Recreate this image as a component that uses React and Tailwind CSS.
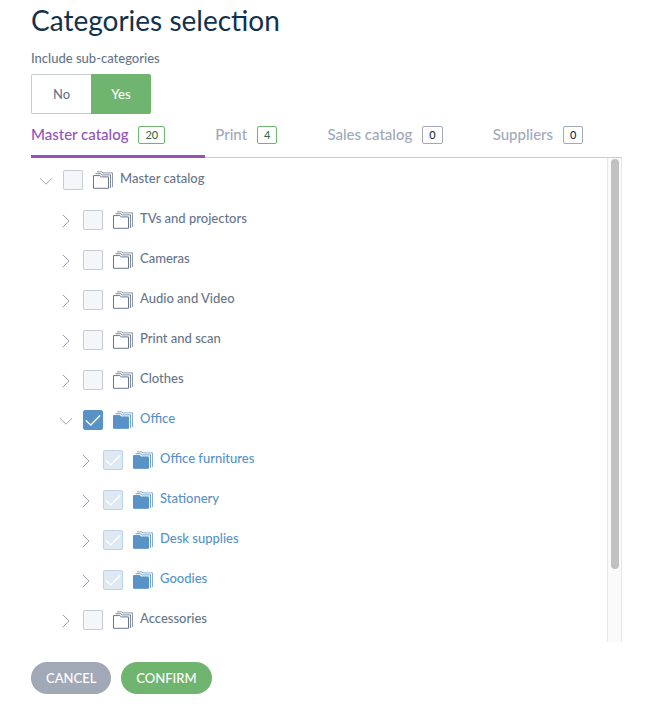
import { useState } from "react";

const TABS = [
  { label: "Master catalog", count: 20 },
  { label: "Print", count: 4 },
  { label: "Sales catalog", count: 0 },
  { label: "Suppliers", count: 0 },
];

const ROWS = [
  { label: "Master catalog", level: 0, open: true, state: "none" },
  { label: "TVs and projectors", level: 1, state: "none" },
  { label: "Cameras", level: 1, state: "none" },
  { label: "Audio and Video", level: 1, state: "none" },
  { label: "Print and scan", level: 1, state: "none" },
  { label: "Clothes", level: 1, state: "none" },
  { label: "Office", level: 1, open: true, state: "checked" },
  { label: "Office furnitures", level: 2, state: "inherited" },
  { label: "Stationery", level: 2, state: "inherited" },
  { label: "Desk supplies", level: 2, state: "inherited" },
  { label: "Goodies", level: 2, state: "inherited" },
  { label: "Accessories", level: 1, state: "none" },
];

const INDENT = ["pl-2", "pl-7", "pl-12"];

const BOX = {
  none: "border-[#c7cbd4] bg-[#f5f6fa]",
  checked: "border-[#5992c7] bg-[#5992c7]",
  inherited: "border-[#bdd3e9] bg-[#dee9f4]",
};

function Arrow({ open }) {
  return (
    <svg className="h-5 w-4" viewBox="0 0 16 20" fill="none" stroke="#8f99ab" strokeWidth=".9" strokeLinecap="round">
      {open ? <path d="M1.2 8.5 7 14.2 12.8 8.5" /> : <path d="M4 5 10 11 4 17" />}
    </svg>
  );
}

function Folders({ filled }) {
  const color = filled ? "#5992c7" : "#67768a";
  return (
    <svg className="h-5 w-5 shrink-0" viewBox="0 0 20 20" fill="none" stroke={color}>
      <path d="M.5 18.3V5.6H6.8L8.3 6.9H15.5V18.3Z" fill={filled ? color : "none"} />
      <path d="M2.5 3.7H7.8L9.3 4.9H17.5V18" strokeOpacity=".85" />
      <path d="M4 1.8H8.5L10 2.9H19.5V17" strokeOpacity=".75" />
    </svg>
  );
}

function Row({ row }) {
  const { label, level, open, state } = row;
  const active = state !== "none";
  return (
    <li className={`flex h-10 items-center ${INDENT[level]}`}>
      <button type="button" aria-label={open ? "Collapse" : "Expand"} className="mr-2 h-5 w-4">
        <Arrow open={open} />
      </button>
      <label className="flex items-center">
        <span className="grid h-5 w-5">
          <input
            type="checkbox"
            defaultChecked={active}
            disabled={state === "inherited"}
            className={`col-start-1 row-start-1 h-5 w-5 appearance-none rounded-xs border ${BOX[state]}`}
          />
          {active && (
            <svg className="pointer-events-none col-start-1 row-start-1 h-5 w-5" viewBox="0 0 20 20" fill="none" stroke="#fff" strokeWidth="1.3" strokeLinecap="round">
              <path d="M3.2 10.7 7.8 15 16.8 5.8" />
            </svg>
          )}
        </span>
        <span className="ml-2.5">
          <Folders filled={active} />
        </span>
        <span className={`ml-[7px] pb-1 text-[13px] leading-5 font-medium ${active ? "text-[#5992c7]" : "text-[#67768a]"}`}>
          {label}
        </span>
      </label>
    </li>
  );
}

export default function App() {
  const [include, setInclude] = useState(true);
  return (
    <main className="bg-white pr-[25px] pb-4 pl-[31px] font-['Lato',sans-serif] text-[13px] text-[#67768a]">
      <h1 className="pt-0.5 text-[28px] leading-9 text-[#11324d]">Categories selection</h1>
      <p className="pt-2.5 pb-1.5 leading-5 font-medium">Include sub-categories</p>
      <div className="flex h-10">
        <button
          type="button"
          aria-pressed={!include}
          onClick={() => setInclude(false)}
          className={`w-15 rounded-l-xs pt-0.5 font-medium ${include ? "border border-r-0 border-[#c7cbd4]" : "bg-[#70b56f] text-white"}`}
        >
          No
        </button>
        <button
          type="button"
          aria-pressed={include}
          onClick={() => setInclude(true)}
          className={`w-15 rounded-r-xs pt-0.5 font-medium ${include ? "bg-[#70b56f] text-white" : "border border-l-0 border-[#c7cbd4]"}`}
        >
          Yes
        </button>
      </div>
      <nav className="flex h-11 gap-2.5 border-b border-[#c7cbd4]">
        {TABS.map((tab, i) => (
          <button
            key={tab.label}
            type="button"
            className={`-mb-px flex items-start gap-2.5 pt-2.5 pr-10 text-[15px] leading-5 font-medium whitespace-nowrap ${
              i === 0 ? "border-b-3 border-[#9452ba] text-[#9452ba]" : "text-[#a1a9b7]"
            }`}
          >
            {tab.label}
            <span
              className={`mt-0.5 rounded-xs border px-1.5 text-[11px] leading-4 ${
                tab.count ? "border-[#70b56f] text-[#3d6b45]" : "border-[#a1a9b7] text-[#11324d]"
              }`}
            >
              {tab.count}
            </span>
          </button>
        ))}
      </nav>
      <div className="flex">
        <ul className="flex-1 py-0.5">
          {ROWS.map((row) => (
            <Row key={row.label + row.level} row={row} />
          ))}
        </ul>
        <div className="w-[15px] border-x border-[#e8e8e8] bg-[#fafafa] pt-px">
          <div className="mx-auto h-[410px] w-2 rounded-full bg-[#c1c1c1]" />
        </div>
      </div>
      <div className="flex gap-2.5 pt-5">
        <button type="button" className="h-8 rounded-full bg-[#a1a9b7] px-[15px] pt-0.5 font-medium text-white">
          CANCEL
        </button>
        <button type="button" className="h-8 rounded-full bg-[#70b56f] px-[15px] pt-0.5 font-medium text-white">
          CONFIRM
        </button>
      </div>
    </main>
  );
}
